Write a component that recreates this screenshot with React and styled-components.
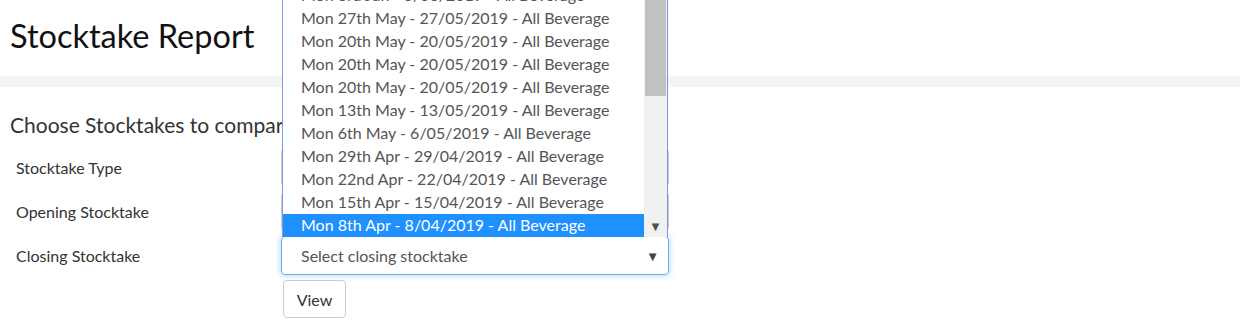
import React from 'react'
import styled, { createGlobalStyle } from 'styled-components'

const GlobalStyle = createGlobalStyle`
  html, body {
    margin: 0;
    padding: 0;
    background: #fff;
    font-family: Lato, "Open Sans", sans-serif;
    color: #333;
  }
  * {
    box-sizing: border-box;
  }
`

const options = [
  'Mon 3rd Jun - 3/06/2019 - All Beverage',
  'Mon 27th May - 27/05/2019 - All Beverage',
  'Mon 20th May - 20/05/2019 - All Beverage',
  'Mon 20th May - 20/05/2019 - All Beverage',
  'Mon 20th May - 20/05/2019 - All Beverage',
  'Mon 13th May - 13/05/2019 - All Beverage',
  'Mon 6th May - 6/05/2019 - All Beverage',
  'Mon 29th Apr - 29/04/2019 - All Beverage',
  'Mon 22nd Apr - 22/04/2019 - All Beverage',
  'Mon 15th Apr - 15/04/2019 - All Beverage',
  'Mon 8th Apr - 8/04/2019 - All Beverage',
]

const App = () => {
  return (
    <Page>
      <GlobalStyle />
      <Header>
        <h1>Stocktake Report</h1>
      </Header>
      <Band />
      <Content>
        <h3>Choose Stocktakes to compare</h3>
        <Form>
          <Row>
            <Label>Stocktake Type</Label>
            <Select />
          </Row>
          <Row>
            <Label>Opening Stocktake</Label>
            <Select />
          </Row>
          <Row>
            <Label>Closing Stocktake</Label>
            <Select focused>
              <span>Select closing stocktake</span>
              <Caret>▼</Caret>
              <List>
                <Items>
                  {options.map((opt, i) => (
                    <Item key={i} selected={i === options.length - 1}>
                      {opt}
                    </Item>
                  ))}
                </Items>
                <Scrollbar>
                  <Thumb />
                  <Track />
                  <ArrowButton>▼</ArrowButton>
                </Scrollbar>
              </List>
            </Select>
          </Row>
          <Row>
            <Label />
            <Button>View</Button>
          </Row>
        </Form>
      </Content>
    </Page>
  )
}

const Page = styled.div`
  width: 1240px;
  height: 332px;
  overflow: hidden;
`

const Header = styled.header`
  height: 76px;
  padding: 0 10px;
  display: flex;
  align-items: center;
  h1 {
    margin: 0;
    font-size: 32.5px;
    font-weight: 400;
    color: #111;
    padding-bottom: 6px;
  }
`

const Band = styled.div`
  height: 11px;
  background: #f4f4f4;
`

const Content = styled.section`
  padding: 25px 10px 0;
  h3 {
    margin: 0 0 10px;
    font-size: 21px;
    font-weight: 400;
    line-height: 26px;
    color: #333;
  }
`

const Form = styled.div`
  display: flex;
  flex-direction: column;
  gap: 5px;
`

const Row = styled.div`
  display: flex;
  align-items: center;
`

const Label = styled.div`
  width: 271px;
  padding-left: 6px;
  font-size: 16px;
  color: #333;
  flex-shrink: 0;
`

const Select = styled.div`
  position: relative;
  width: 388px;
  height: 39px;
  border: 1px solid ${(p) => (p.focused ? '#66afe9' : '#ccc')};
  border-radius: 4px;
  box-shadow: ${(p) =>
    p.focused ? '0 0 6px rgba(102,175,233,0.6)' : 'none'};
  display: flex;
  align-items: center;
  padding: 0 9px 0 19px;
  font-size: 16px;
  color: #555;
  span {
    flex: 1;
  }
`

const Caret = styled.div`
  font-size: 13px;
  color: #444;
`

const List = styled.div`
  position: absolute;
  left: 0;
  bottom: 100%;
  width: 386px;
  height: 258px;
  border: 1px solid #7b9bd6;
  border-bottom: none;
  background: #fff;
  display: flex;
  overflow: hidden;
`

const Items = styled.div`
  flex: 1;
  display: flex;
  flex-direction: column;
  justify-content: flex-end;
  overflow: hidden;
`

const Item = styled.div`
  height: 23px;
  line-height: 21px;
  padding-bottom: 2px;
  flex-shrink: 0;
  padding-left: 18px;
  font-size: 16px;
  white-space: nowrap;
  color: ${(p) => (p.selected ? '#fff' : '#555')};
  background: ${(p) => (p.selected ? '#1e90ff' : '#fff')};
`

const Scrollbar = styled.div`
  width: 23px;
  background: #f1f1f1;
  display: flex;
  flex-direction: column;
  align-items: center;
`

const Thumb = styled.div`
  width: 21px;
  height: 116px;
  background: #c1c1c1;
`

const Track = styled.div`
  flex: 1;
`

const ArrowButton = styled.div`
  height: 22px;
  font-size: 13px;
  color: #505050;
  display: flex;
  align-items: center;
`

const Button = styled.button`
  margin-left: 2px;
  width: 63px;
  height: 38px;
  background: #fff;
  border: 1px solid #ccc;
  border-radius: 4px;
  font-family: inherit;
  font-size: 16px;
  color: #333;
`

export default App
